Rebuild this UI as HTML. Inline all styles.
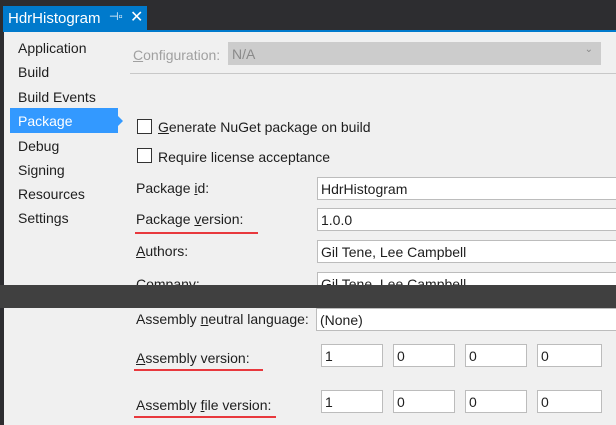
<!DOCTYPE html>
<html><head><meta charset="utf-8"><style>
*{margin:0;padding:0;box-sizing:border-box}
body{width:616px;height:425px;overflow:hidden;background:#2d2d30;font-family:"Liberation Sans",sans-serif;font-size:14px;color:#1e1e1e;position:relative}
.a{position:absolute;white-space:nowrap}
.p{position:absolute;background:#f0f0f0}
.box{position:absolute;background:#fff;border:1px solid #bcbcbc;padding:2px 0 0 3px;height:23px;line-height:18px}
.cb{position:absolute;width:15px;height:15px;border:1px solid #333;background:#fff}
.red{position:absolute;height:2px;background:#e8383d}
u{text-decoration:underline}
</style></head><body>
<div class="a" style="left:3px;top:6px;width:144px;height:25px;background:#007acc;color:#fff;font-size:15px;padding:4px 0 0 5px">HdrHistogram<span style="position:absolute;left:106px;top:4px;font-size:11px">⊣▫</span><span style="position:absolute;left:127px;top:1px;font-size:16px">✕</span></div>
<div class="a" style="left:3px;top:30px;width:613px;height:2px;background:#007acc"></div>
<div class="p" style="left:4px;top:32px;width:612px;height:253px"></div>
<div class="a" style="left:0;top:285px;width:616px;height:23px;background:#404040"></div>
<div class="p" style="left:4px;top:308px;width:612px;height:117px"></div>

<div class="a" style="left:18px;top:40px">Application</div>
<div class="a" style="left:18px;top:64px">Build</div>
<div class="a" style="left:18px;top:89px">Build Events</div>
<div class="a" style="left:10px;top:108px;width:108px;height:25px;background:#3399ff;color:#fff;padding:5px 0 0 8px">Package</div>
<div class="a" style="left:118px;top:116px;width:0;height:0;border-top:5px solid transparent;border-bottom:5px solid transparent;border-left:5px solid #3399ff"></div>
<div class="a" style="left:18px;top:138px">Debug</div>
<div class="a" style="left:18px;top:162px">Signing</div>
<div class="a" style="left:18px;top:186px">Resources</div>
<div class="a" style="left:18px;top:210px">Settings</div>

<div class="a" style="left:133px;top:47px;color:#a0a0a0"><u>C</u>onfiguration:</div>
<div class="a" style="left:228px;top:42px;width:373px;height:23px;background:#cccccc;color:#8a8a8a;padding:4px 0 0 4px">N/A<span style="position:absolute;right:8px;top:2px;font-size:10px">⌄</span></div>
<div class="a" style="left:130px;top:73px;width:486px;height:1px;background:#c8c8c8"></div>

<div class="cb" style="left:137px;top:119px"></div>
<div class="a" style="left:158px;top:119px"><u>G</u>enerate NuGet package on build</div>
<div class="cb" style="left:137px;top:148px"></div>
<div class="a" style="left:158px;top:149px">Require license acceptance</div>

<div class="a" style="left:136px;top:180px">Package <u>i</u>d:</div>
<div class="box" style="left:317px;top:177px;width:310px">HdrHistogram</div>
<div class="a" style="left:136px;top:211px">Package <u>v</u>ersion:</div>
<div class="red" style="left:135px;top:232px;width:123px"></div>
<div class="box" style="left:317px;top:208px;width:310px">1.0.0</div>
<div class="a" style="left:136px;top:243px"><u>A</u>uthors:</div>
<div class="box" style="left:317px;top:240px;width:310px">Gil Tene, Lee Campbell</div>
<div style="position:absolute;left:0;top:270px;width:616px;height:15px;overflow:hidden">
<div class="a" style="left:136px;top:6px">Company:</div>
<div class="box" style="left:317px;top:2px;width:310px">Gil Tene, Lee Campbell</div>
</div>

<div class="a" style="left:136px;top:311px">Assembly <u>n</u>eutral language:</div>
<div class="box" style="left:316px;top:308px;width:310px">(None)</div>
<div class="a" style="left:136px;top:350px"><u>A</u>ssembly version:</div>
<div class="red" style="left:134px;top:369px;width:129px"></div>
<div class="box" style="left:321px;top:344px;width:62px">1</div>
<div class="box" style="left:393px;top:344px;width:62px">0</div>
<div class="box" style="left:465px;top:344px;width:62px">0</div>
<div class="box" style="left:537px;top:344px;width:65px">0</div>
<div class="a" style="left:136px;top:397px">Assembly <u>f</u>ile version:</div>
<div class="red" style="left:134px;top:416px;width:142px"></div>
<div class="box" style="left:321px;top:390px;width:62px">1</div>
<div class="box" style="left:393px;top:390px;width:62px">0</div>
<div class="box" style="left:465px;top:390px;width:62px">0</div>
<div class="box" style="left:537px;top:390px;width:65px">0</div>
</body></html>
